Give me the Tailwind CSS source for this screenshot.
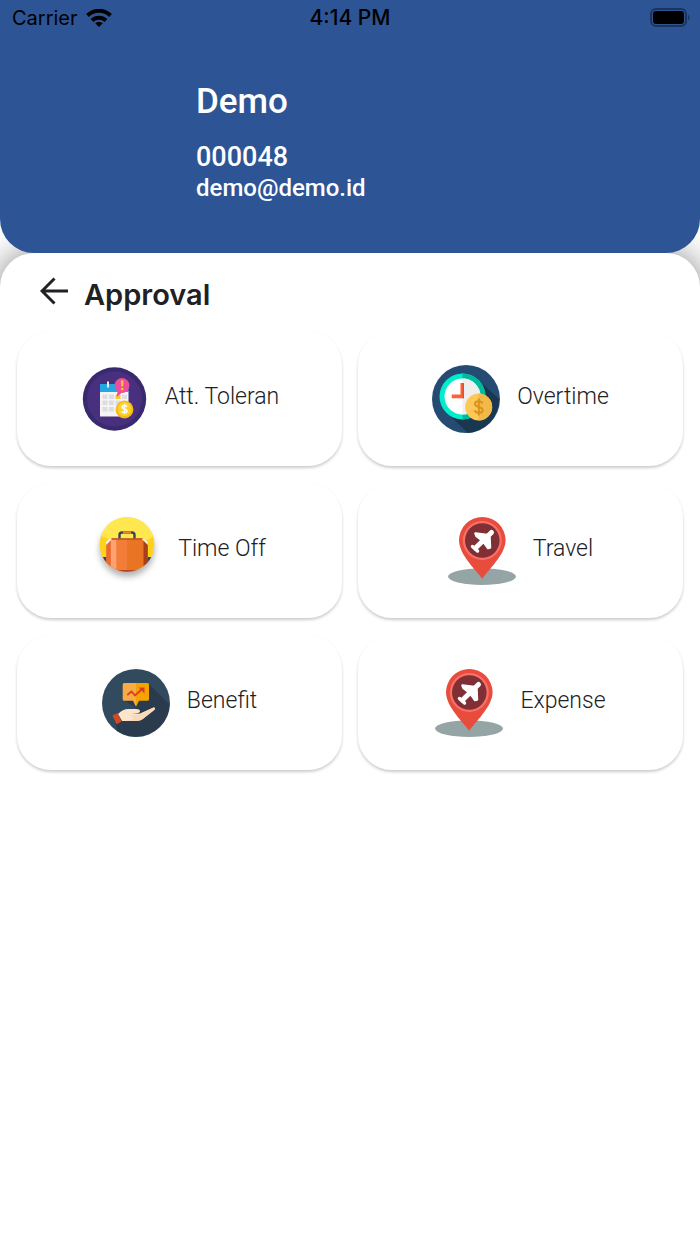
<!DOCTYPE html>
<html lang="en" class="bg-white">
<head>
  <meta charset="UTF-8" />
  <meta name="viewport" content="width=device-width, initial-scale=1.0"/>
  <title>Approval</title>
  <script src="https://cdn.jsdelivr.net/npm/@tailwindcss/browser@4"></script>
</head>
<body class="flex flex-col min-h-screen bg-white font-['Roboto',sans-serif] text-[#202124]">

  <!-- Profile Header -->
  <header class="relative z-10 bg-[#2d5596] rounded-b-[34px] pb-[49px]">
    <div class="grid grid-cols-3 items-center h-9 px-[9px] font-['Inter',sans-serif] text-xl text-black">
      <div class="flex items-center gap-2 pl-[3px]">
        <span>Carrier</span>
        <svg class="w-[26px] h-[19px]" viewBox="0 0 26 19" fill="none" stroke="#000" stroke-width="4">
          <path d="M1.500 6.500a16.500 16.500 0 0 1 23 0" />
          <path d="M6 11.500a10 10 0 0 1 14 0" />
          <path d="M13 18l-3.800-3.700a5.500 5.500 0 0 1 7.600 0z" fill="#000" stroke="none" />
        </svg>
      </div>
      <div class="text-center text-[21px] font-medium">4:14 PM</div>
      <svg class="justify-self-end w-[41px] h-5" viewBox="0 0 41 20">
        <rect x="1" y="1" width="35" height="17" rx="5" fill="none" stroke="#1c355e" stroke-width="2" />
        <rect x="3" y="3" width="31" height="13" rx="3" fill="#000" />
        <path d="M38 6.500q3 3 0 6z" fill="#1c355e" />
      </svg>
    </div>
    <div class="pl-[28%] pt-11 font-medium text-white">
      <h1 class="text-[35px] leading-[44px] mb-[18px]">Demo</h1>
      <p class="text-[27px] leading-[31px]">000048</p>
      <p class="text-[24px] leading-[31px]">demo@demo.id</p>
    </div>
  </header>

  <main class="flex-1 bg-white rounded-t-[34px] shadow-[0_0_34px_rgba(0,0,0,0.5)] pb-10">
    <!-- Title -->
    <div class="flex items-center gap-4 h-[78px] pt-[5px] pl-10">
      <button type="button" aria-label="Back" class="-mt-2">
        <svg class="w-7 h-7" viewBox="0 0 28 28" fill="none" stroke="#202124" stroke-width="3">
          <path d="M28 14H3M14.500 1.500L2 14l12.500 12.500" />
        </svg>
      </button>
      <h2 class="font-['Inter',sans-serif] text-[29px] font-semibold">Approval</h2>
    </div>

    <!-- Menu -->
    <nav class="grid grid-cols-2 gap-x-4 gap-y-[17px] px-[17px] text-[23px] font-light">
      <button type="button" class="flex items-center justify-center gap-[17px] h-[135px] rounded-[34px] bg-white shadow-[0_2px_3px_rgba(0,0,0,0.2)]">
        <svg class="w-[68px] h-[68px]" viewBox="0 0 68 68">
          <circle cx="34.500" cy="34" r="31.700" fill="#392a70" />
          <circle cx="34.500" cy="34" r="27.500" fill="#48307f" />
          <path d="M20 26h28.500v25.500H20z" fill="#f4f4f6" />
          <path d="M20 19h28.500v8H20z" fill="#22a7e0" />
          <path d="M27 16.500h2v6h-2z" fill="#eee" />
          <path d="M22.500 29.500h5v4.500h-5zM29 29.500h5v4.500h-5zM22.500 35.500h5v4.500h-5zM29 35.500h5v4.500h-5zM35.500 35.500h5v4.500h-5zM42 29.500h5v4.500h-5zM22.500 42h5v4.500h-5zM29 42h5v4.500h-5z" fill="#dcdce3" />
          <path d="M35.500 29.500h5v4.500h-5z" fill="#ffc928" />
          <path d="M38 25l-1.500 7 6-5z" fill="#e8489a" />
          <circle cx="42" cy="20.500" r="7.400" fill="#ee4d9b" />
          <path d="M40.800 15.500h2.800l-.5 6h-1.800zM41 23h2.400v2.200H41z" fill="#ffc928" />
          <circle cx="44.500" cy="44.500" r="8.900" fill="#f7b918" />
          <circle cx="44.500" cy="44" r="6.900" fill="#ffd22e" />
          <path d="M47 41.500c-1-1.600-5-1.500-5 .6 0 2.400 5 1.400 5 3.800 0 2.200-4.200 2.100-5.200.4M44.500 39v10" fill="none" stroke="#fff" stroke-width="1.500" />
        </svg>
        <span class="pb-[2px]">Att. Toleran</span>
      </button>

      <button type="button" class="flex items-center justify-center gap-[17px] h-[135px] rounded-[34px] bg-white shadow-[0_2px_3px_rgba(0,0,0,0.2)]">
        <svg class="w-[68px] h-[68px]" viewBox="0 0 68 68">
          <circle cx="34" cy="34" r="34" fill="#254b73" />
          <path d="M47 15.500l20 18.500a34 34 0 0 1-31 34L14 47z" fill="#19374f" />
          <circle cx="30.500" cy="31.500" r="23" fill="#00ecca" />
          <path d="M30.500 8.500a23 23 0 0 1 0 46z" fill="#00ba9e" />
          <circle cx="30.500" cy="31.500" r="18" fill="#fff" />
          <path d="M30.500 13.500a18 18 0 0 1 0 36z" fill="#eeefee" />
          <path d="M28.500 18H32v15.200H19.700v-3.800h8.800z" fill="#fd6137" />
          <path d="M30.500 18H32v15.200h-1.500z" fill="#e44e28" />
          <circle cx="46.700" cy="42" r="13.500" fill="#fdc855" />
          <path d="M46.700 28.500a13.500 13.500 0 0 1 0 27z" fill="#f3b84a" />
          <path d="M50.500 38.500c-1-3-7.500-3-7.500.4 0 3.700 7.700 2.400 7.700 6.300 0 3.500-7 3.500-8 0M46.800 33.500v17" fill="none" stroke="#d8931e" stroke-width="2" />
        </svg>
        <span class="pb-[2px]">Overtime</span>
      </button>

      <button type="button" class="flex items-center justify-center gap-[17px] h-[135px] rounded-[34px] bg-white shadow-[0_2px_3px_rgba(0,0,0,0.2)]">
        <svg class="w-[68px] h-[68px] overflow-visible" viewBox="0 0 68 68">
          <defs>
            <clipPath id="sun"><circle cx="34" cy="27.500" r="27.300" /></clipPath>
          </defs>
          <circle cx="34" cy="27.500" r="27.300" fill="#ffd21c" class="drop-shadow-[0_5px_3px_rgba(0,0,0,0.3)]" />
          <g clip-path="url(#sun)">
            <path d="M0 0h68v10L57 22 34 27 10 20 0 8z" fill="#ffe750" />
            <path d="M6 40h8v16H6zM54 40h8v16h-8z" fill="#35445a" />
            <path d="M26.500 22v-4q0-2.500 2.500-2.500h10q2.500 0 2.500 2.500v4" fill="none" stroke="#34465f" stroke-width="2.400" />
            <path d="M30 15.500h8" stroke="#f18131" stroke-width="2.400" />
            <path d="M18 21.700h32l4.700 5V56H13.500V26z" fill="#e97424" />
            <path d="M13.500 26l4.500-4.300h16V56H13.500z" fill="#f17d38" />
            <path d="M17.700 22h5.600v34h-5.600z" fill="#ffa173" />
            <path d="M13.500 26l4.200-4v34h-4.200z" fill="#ed6930" />
            <path d="M50.500 22l4.200 4v30h-4.200z" fill="#a93e18" />
            <path d="M18 21.200h32v1.500H18z" fill="#b9511e" />
            <path d="M13.200 28l-.2-3 3.500-3.300h2.700zM54.800 28V25l-3.500-3.300h-2.700z" fill="#edf3f5" />
            <path d="M13 53h42v3H13z" fill="#b04a21" />
          </g>
        </svg>
        <span class="pb-[2px]">Time Off</span>
      </button>

      <button type="button" class="flex items-center justify-center gap-[17px] h-[135px] rounded-[34px] bg-white shadow-[0_2px_3px_rgba(0,0,0,0.2)]">
        <svg class="w-[68px] h-[68px]" viewBox="0 0 68 68">
          <ellipse cx="34" cy="59.600" rx="34" ry="8.300" fill="#95a5a5" />
          <path d="M34.300 62C29 54 11 38 11 23.300a23.300 23.300 0 0 1 46.600 0C57.600 38 39 54 34.300 62z" fill="#e74c3c" />
          <circle cx="34.300" cy="23.500" r="19.500" fill="#fa7069" />
          <circle cx="34.300" cy="23.500" r="17.300" fill="#802f34" />
          <g fill="#fff" stroke="#fff" stroke-linecap="round" stroke-linejoin="round">
            <path d="M43.500 15.500L27.500 31" stroke-width="5" />
            <path d="M27.500 16.500l12 1.500 2 2 .5 10.500-2 .5-5-7-6.500-5z" stroke-width="2.500" />
            <path d="M24.500 29.500l5 4.500" stroke-width="3.500" />
          </g>
        </svg>
        <span class="pb-[2px]">Travel</span>
      </button>

      <button type="button" class="flex items-center justify-center gap-[17px] h-[135px] rounded-[34px] bg-white shadow-[0_2px_3px_rgba(0,0,0,0.2)]">
        <svg class="w-[68px] h-[68px]" viewBox="0 0 68 68">
          <circle cx="34" cy="34" r="34" fill="#324a5e" />
          <path d="M47 15l20.500 20.500A34 34 0 0 1 15 62l-2-11 22-11-13-9z" fill="#2b3b4e" />
          <path d="M22.200 14H34v23.700l-3-6h-8.800q-1.500 0-1.500-1.500V15.500q0-1.500 1.500-1.500z" fill="#f9ac45" />
          <path d="M34 14h11.500q1.500 0 1.500 1.500v14.700q0 1.500-1.500 1.500H37l-3 6z" fill="#f6a200" />
          <path d="M25.300 26l4.200-3.500 3.500 4 7-6.500" fill="none" stroke="#d7401f" stroke-width="1.800" />
          <path d="M36.500 18.500h6v6z" fill="#d7401f" />
          <path d="M16 45q5-5 10-5h8q4 0 4 2t-3 2.300L30 45l8-.5 13-5.800q3-.5 1.500 2L42 49q-3 3-8 3H20z" fill="#fbe5cb" />
          <path d="M28 46q5 1 10-1l13-6.300q3-.5 1.500 2L42 49q-3 3-8 3H20q8 0 12-3z" fill="#f8d9b8" />
          <path d="M10.500 46.500l5-2.500 4.200 8.500-5.200 2.700z" fill="#cf4b25" />
        </svg>
        <span class="pb-[2px]">Benefit</span>
      </button>

      <button type="button" class="flex items-center justify-center gap-[17px] h-[135px] rounded-[34px] bg-white shadow-[0_2px_3px_rgba(0,0,0,0.2)]">
        <svg class="w-[68px] h-[68px]" viewBox="0 0 68 68">
          <ellipse cx="34" cy="59.600" rx="34" ry="8.300" fill="#95a5a5" />
          <path d="M34.300 62C29 54 11 38 11 23.300a23.300 23.300 0 0 1 46.600 0C57.600 38 39 54 34.300 62z" fill="#e74c3c" />
          <circle cx="34.300" cy="23.500" r="19.500" fill="#fa7069" />
          <circle cx="34.300" cy="23.500" r="17.300" fill="#802f34" />
          <g fill="#fff" stroke="#fff" stroke-linecap="round" stroke-linejoin="round">
            <path d="M43.500 15.500L27.500 31" stroke-width="5" />
            <path d="M27.500 16.500l12 1.500 2 2 .5 10.500-2 .5-5-7-6.500-5z" stroke-width="2.500" />
            <path d="M24.500 29.500l5 4.500" stroke-width="3.500" />
          </g>
        </svg>
        <span class="pb-[2px]">Expense</span>
      </button>
    </nav>
  </main>

</body>
</html>
